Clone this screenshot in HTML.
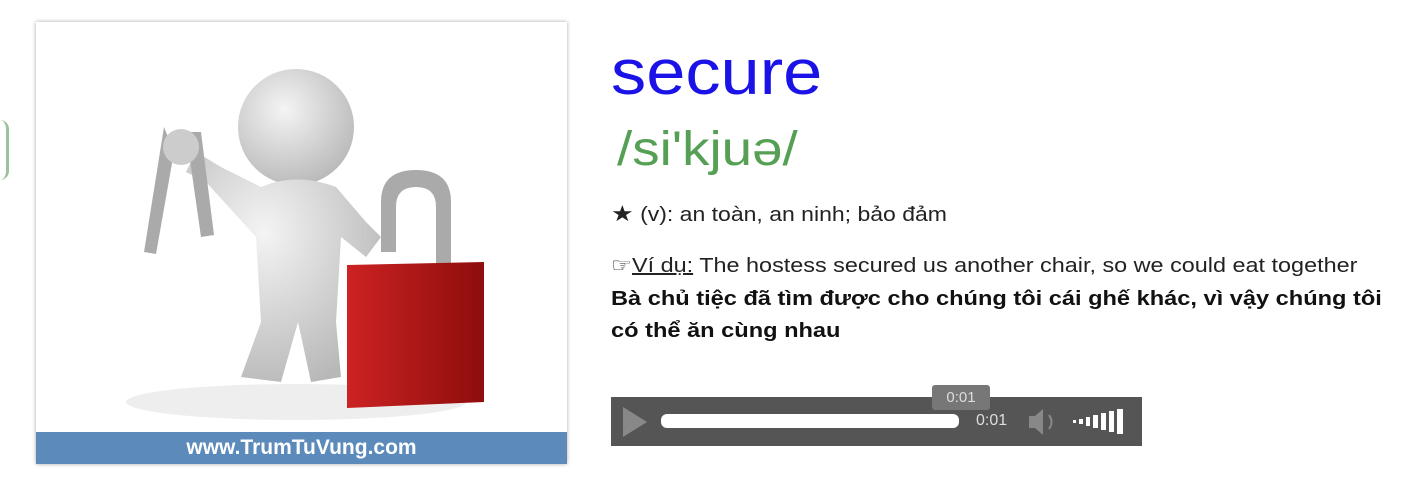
<!DOCTYPE html>
<html><head><meta charset="utf-8"><style>
body{margin:0;width:1408px;height:483px;background:#fff;position:relative;overflow:hidden;font-family:"Liberation Sans",Arial,sans-serif}
.a{position:absolute;white-space:nowrap;transform-origin:0 0}
</style></head><body>
<div class="a" style="left:0;top:120px;width:6px;height:60px;border-right:3px solid #5a9a5a;border-radius:0 40px 40px 0;opacity:.6"></div>
<div class="a" style="left:36px;top:22px;width:531px;height:442px;background:#fff;box-shadow:0 0 4px rgba(0,0,0,.35)">
<svg width="531" height="410" viewBox="0 0 531 410" style="position:absolute;left:0;top:0">
<defs><radialGradient id="g" cx=".4" cy=".35" r=".7"><stop offset="0" stop-color="#f4f4f4"/><stop offset="1" stop-color="#b8b8b8"/></radialGradient>
<linearGradient id="r" x1="0" x2="1"><stop offset="0" stop-color="#c22"/><stop offset="1" stop-color="#8e0d0d"/></linearGradient></defs>
<ellipse cx="260" cy="380" rx="170" ry="18" fill="#eee"/>
<circle cx="260" cy="105" r="58" fill="url(#g)"/>
<path d="M225 165 Q260 150 300 165 L330 200 L345 215 L330 235 L305 215 L300 300 L305 355 L275 360 L262 300 L245 360 L205 355 L225 300 L220 215 L170 160 L150 150 L160 130 L185 145 Z" fill="url(#g)"/>
<path d="M128 105 L108 230 L120 232 L138 130 Z M150 110 L165 215 L178 213 L165 110 Z" fill="#aaa"/>
<circle cx="145" cy="125" r="18" fill="#ccc"/>
<path d="M345 230 L345 180 Q345 148 380 148 Q415 148 415 180 L415 245 L400 245 L400 185 Q400 165 380 165 Q360 165 360 185 L360 230 Z" fill="#aaa"/>
<path d="M311 243 L448 240 L448 380 L311 386 Z" fill="url(#r)"/>
</svg>
<div class="a" style="left:0;top:410px;width:531px;height:32px;background:#5b8abb;color:#fff;font-weight:bold;font-size:21px;text-align:center;line-height:32px">www.TrumTuVung.com</div>
</div>
<div class="a" style="left:611px;top:36px;font-size:64px;color:#1a12e6;line-height:72px;transform:scaleX(1.1)">secure</div>
<div class="a" style="left:617px;top:122px;font-size:48px;color:#55a055;line-height:56px;transform:scaleX(1.14)">/si'kjuə/</div>
<div class="a" style="left:611px;top:201px;font-size:20px;color:#222;line-height:26px;transform:scaleX(1.15)"><span style="font-size:22px">★</span> (v): an toàn, an ninh; bảo đảm</div>
<div class="a" style="left:611px;top:253px;font-size:20px;color:#222;line-height:26px;transform:scaleX(1.17)">☞<u>Ví dụ:</u> The hostess secured us another chair, so we could eat together</div>
<div class="a" style="left:611px;top:283px;font-size:20px;color:#111;font-weight:bold;line-height:32px;transform:scaleX(1.18)">Bà chủ tiệc đã tìm được cho chúng tôi cái ghế khác, vì vậy chúng tôi<br>có thể ăn cùng nhau</div>
<div class="a" style="left:611px;top:397px;width:531px;height:49px;background:#555"></div>
<svg class="a" style="left:611px;top:397px" width="531" height="49"><path d="M12 10 L36 25 L12 40 Z" fill="#888"/>
<rect x="50" y="17" width="298" height="14" rx="6" fill="#fff"/>
<path d="M418 19 h6 l8 -7 v26 l-8 -7 h-6z" fill="#888"/><path d="M438 18 q5 7 0 14" stroke="#888" stroke-width="2" fill="none"/>
<g fill="#fff"><rect x="462" y="23" width="3" height="3"/><rect x="468" y="22" width="4" height="5"/><rect x="475" y="20" width="4" height="9"/><rect x="482" y="18" width="5" height="13"/><rect x="490" y="16" width="5" height="17"/><rect x="498" y="14" width="5" height="21"/><rect x="506" y="12" width="6" height="25"/></g></svg>
<div class="a" style="left:976px;top:412px;color:#ddd;font-size:16px">0:01</div>
<div class="a" style="left:932px;top:385px;width:58px;height:25px;background:#777;border-radius:3px;color:#ddd;font-size:15px;text-align:center;line-height:25px">0:01</div>
</body></html>
